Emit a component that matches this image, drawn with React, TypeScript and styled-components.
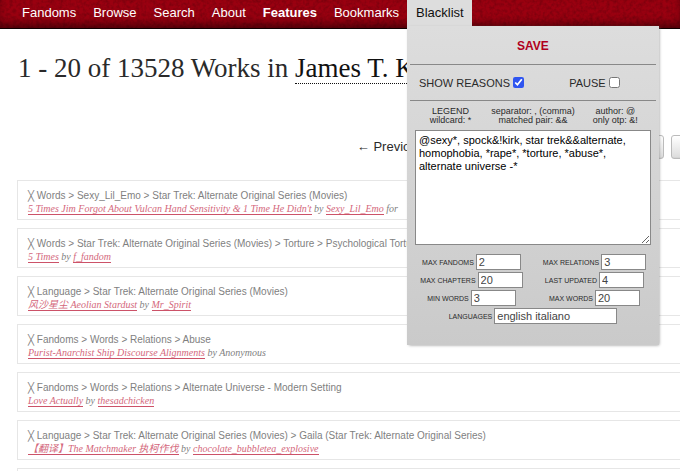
import React from "react";
import styled, { createGlobalStyle, css } from "styled-components";

const SANS = '"Liberation Sans", Arial, "Noto Sans CJK SC", sans-serif';
const SERIF = '"Liberation Serif", Georgia, "Noto Sans CJK SC", serif';

const GlobalStyle = createGlobalStyle`
  *, *::before, *::after { box-sizing: border-box; }
  body {
    margin: 0;
    background: #fff;
    color: #2a2a2a;
    font-family: ${SANS};
    font-size: 13px;
  }
`;

const Page = styled.div`
  height: 100vh;
  overflow: hidden;
`;

const Header = styled.header`
  position: relative;
  height: 29px;
  background: #9a0010;
  border-bottom: 1px solid #100002;
  box-shadow: inset 0 -6px 8px -2px rgba(0, 0, 0, 0.5);
`;

const Grain = styled.svg`
  position: absolute;
  inset: 0;
  width: 100%;
  height: 100%;
  pointer-events: none;
`;

const Menu = styled.ul`
  position: relative;
  display: flex;
  margin: 0;
  padding: 0 0 0 13px;
  list-style: none;
`;

const MenuItem = styled.li`
  position: relative;
`;

const menuEntry = css`
  display: block;
  margin: 0;
  padding: 0 8px 0 9px;
  border: 0;
  font: 13px/26px ${SANS};
  white-space: nowrap;
`;

const MenuLink = styled.a<{ $bold?: boolean }>`
  ${menuEntry}
  color: #fff;
  font-weight: ${(p) => (p.$bold ? 700 : 400)};
  text-decoration: none;
`;

const MenuTab = styled.button`
  ${menuEntry}
  background: #ddd;
  color: #111;
`;

const Panel = styled.form`
  position: absolute;
  z-index: 2;
  top: 26px;
  left: 0;
  width: 252px;
  padding: 0 3px 21px;
  background: linear-gradient(#ddd, #cacaca);
  box-shadow: 1px 1px 3px -1px #888;
  color: #2a2a2a;
`;

const SaveButton = styled.button`
  display: block;
  width: 100%;
  height: 39px;
  padding: 2px 0 0;
  border: 0;
  border-bottom: 1px solid #888;
  background: none;
  color: #b00020;
  font: bold 12px/20px ${SANS};
`;

const Toggles = styled.div`
  display: grid;
  grid-template-columns: 1fr 1fr;
  height: 36px;
  border-bottom: 1px solid #888;
`;

const Toggle = styled.label`
  display: flex;
  align-items: center;
  justify-content: center;
  gap: 3px;
  font-size: 11px;
  white-space: nowrap;

  input {
    width: 11px;
    height: 11px;
    margin: 0;
    accent-color: #2f55f0;
  }
`;

const Legend = styled.div`
  display: grid;
  grid-template-columns: repeat(3, 1fr);
  padding: 6px 0 5px;
  font-size: 9px;
  line-height: 9px;
  text-align: center;
  white-space: nowrap;

  p { margin: 0; }
`;

const Rules = styled.textarea`
  display: block;
  width: calc(100% - 10px);
  height: 115px;
  margin: 0 5px 9px;
  padding: 3px;
  border: 1px solid #888;
  border-radius: 0;
  background: #fff;
  color: #000;
  font: 11px/13px ${SANS};
`;

const Fields = styled.div`
  display: grid;
  grid-template-columns: 1fr 1fr;
  row-gap: 2px;
`;

const Field = styled.label<{ $wide?: boolean }>`
  display: flex;
  align-items: center;
  justify-content: center;
  gap: 2px;
  grid-column: ${(p) => (p.$wide ? "1 / -1" : "auto")};
  font-size: 7px;
  text-transform: uppercase;
  white-space: nowrap;

  input {
    width: ${(p) => (p.$wide ? 123 : 45)}px;
    height: 16px;
    padding: 0 2px;
    border: 1px solid #888;
    border-radius: 0;
    background: #fff;
    color: #444;
    font: 11px/14px ${SANS};
  }
`;

const Main = styled.main`
  padding: 22px 0 0 17px;
`;

const Title = styled.h2`
  margin: 0;
  padding-left: 1px;
  color: #2a2a2a;
  font: 27px/34px ${SERIF};
  white-space: nowrap;

  a {
    display: inline-block;
    line-height: 30px;
    border-bottom: 1px dotted #111;
    color: #111;
    text-decoration: none;
  }
`;

const Pager = styled.ol`
  display: flex;
  justify-content: flex-end;
  align-items: center;
  gap: 7px;
  margin: 50px -55px 21px 0;
  padding: 0;
  list-style: none;
  line-height: 24px;
`;

const PageButton = styled.button<{ $wide?: boolean }>`
  display: block;
  width: ${(p) => (p.$wide ? 64 : 23)}px;
  height: 24px;
  padding: 0;
  border: 1px solid #bbb;
  border-radius: 3px;
  background: linear-gradient(#fff 2%, #ddd 95%, #ccc);
  color: #2a2a2a;
  font: 13px/20px ${SANS};
`;

const Works = styled.ul`
  display: grid;
  gap: 8px;
  margin: 0 -10px 0 0;
  padding: 0;
  list-style: none;
`;

const Work = styled.li`
  height: 40px;
  padding: 8px 10px 0;
  border: 1px solid #e6e6e6;
  color: #7f7f7f;
  font-size: 10px;
  line-height: 13px;
  white-space: nowrap;
`;

const Reason = styled.div`
  height: 13px;
`;

const Cross = styled.span`
  font-family: "DejaVu Sans Mono", monospace;
`;

const Credit = styled.div`
  height: 13px;
  font-family: ${SERIF};
  font-style: italic;

  a {
    border-bottom: 1px solid #cc5268;
    color: #d4687c;
    text-decoration: none;
  }
`;

type WorkData = { reason: string; title: string; author: string; anonymous?: boolean; suffix?: string };

const works: WorkData[] = [
  { reason: "Words > Sexy_Lil_Emo > Star Trek: Alternate Original Series (Movies)", title: "5 Times Jim Forgot About Vulcan Hand Sensitivity & 1 Time He Didn't", author: "Sexy_Lil_Emo", suffix: " for" },
  { reason: "Words > Star Trek: Alternate Original Series (Movies) > Torture > Psychological Torture", title: "5 Times", author: "f_fandom" },
  { reason: "Language > Star Trek: Alternate Original Series (Movies)", title: "风沙星尘 Aeolian Stardust", author: "Mr_Spirit" },
  { reason: "Fandoms > Words > Relations > Abuse", title: "Purist-Anarchist Ship Discourse Alignments", author: "Anonymous", anonymous: true },
  { reason: "Fandoms > Words > Relations > Alternate Universe - Modern Setting", title: "Love Actually", author: "thesadchicken" },
  { reason: "Language > Star Trek: Alternate Original Series (Movies) > Gaila (Star Trek: Alternate Original Series)", title: "【翻译】The Matchmaker 执柯作伐", author: "chocolate_bubbletea_explosive" },
];

const menu = ["Fandoms", "Browse", "Search", "About", "Features", "Bookmarks"];

const limits = [
  ["Max fandoms", "2"],
  ["Max relations", "3"],
  ["Max chapters", "20"],
  ["Last updated", "4"],
  ["Min words", "3"],
  ["Max words", "20"],
];

const pages = [1, 2, 3, 4, 5, 6, 7, 8];

function BlacklistPanel() {
  return (
    <Panel onSubmit={(e) => e.preventDefault()}>
      <SaveButton type="submit">SAVE</SaveButton>
      <Toggles>
        <Toggle>SHOW REASONS <input type="checkbox" defaultChecked /></Toggle>
        <Toggle>PAUSE <input type="checkbox" /></Toggle>
      </Toggles>
      <Legend>
        <p>LEGEND<br />wildcard: *</p>
        <p>separator: , (comma)<br />matched pair: &amp;&amp;</p>
        <p>author: @<br />only otp: &amp;!</p>
      </Legend>
      <Rules
        aria-label="Blacklist"
        spellCheck={false}
        defaultValue="@sexy*, spock&!kirk, star trek&&alternate, homophobia, *rape*, *torture, *abuse*, alternate universe -*"
      />
      <Fields>
        {limits.map(([label, value]) => (
          <Field key={label}>{label} <input type="text" defaultValue={value} /></Field>
        ))}
        <Field $wide>Languages <input type="text" spellCheck={false} defaultValue="english italiano" /></Field>
      </Fields>
    </Panel>
  );
}

export default function App() {
  return (
    <Page>
      <GlobalStyle />
      <Header>
        <Grain aria-hidden="true">
          <filter id="grain">
            <feTurbulence type="fractalNoise" baseFrequency="0.3" numOctaves="2" seed="4" />
            <feColorMatrix values="0 0 0 0 0  0 0 0 0 0  0 0 0 0 0  0.4 0 0 0 -0.15" />
          </filter>
          <rect width="100%" height="100%" filter="url(#grain)" />
        </Grain>
        <Menu>
          {menu.map((name) => (
            <MenuItem key={name}>
              <MenuLink href="#" $bold={name === "Features"}>{name}</MenuLink>
            </MenuItem>
          ))}
          <MenuItem>
            <MenuTab type="button" aria-expanded="true">Blacklist</MenuTab>
            <BlacklistPanel />
          </MenuItem>
        </Menu>
      </Header>
      <Main>
        <Title>1 - 20 of 13528 Works in <a href="#">James T. Kirk</a></Title>
        <Pager>
          <li>← Previous</li>
          {pages.map((n) => (
            <li key={n}><PageButton type="button">{n}</PageButton></li>
          ))}
          <li><PageButton type="button" $wide aria-label="Next" /></li>
        </Pager>
        <Works>
          {works.map((w) => (
            <Work key={w.title}>
              <Reason><Cross>╳</Cross> {w.reason}</Reason>
              <Credit>
                <a href="#">{w.title}</a> by {w.anonymous ? w.author : <a href="#">{w.author}</a>}{w.suffix}
              </Credit>
            </Work>
          ))}
          <Work />
        </Works>
      </Main>
    </Page>
  );
}
